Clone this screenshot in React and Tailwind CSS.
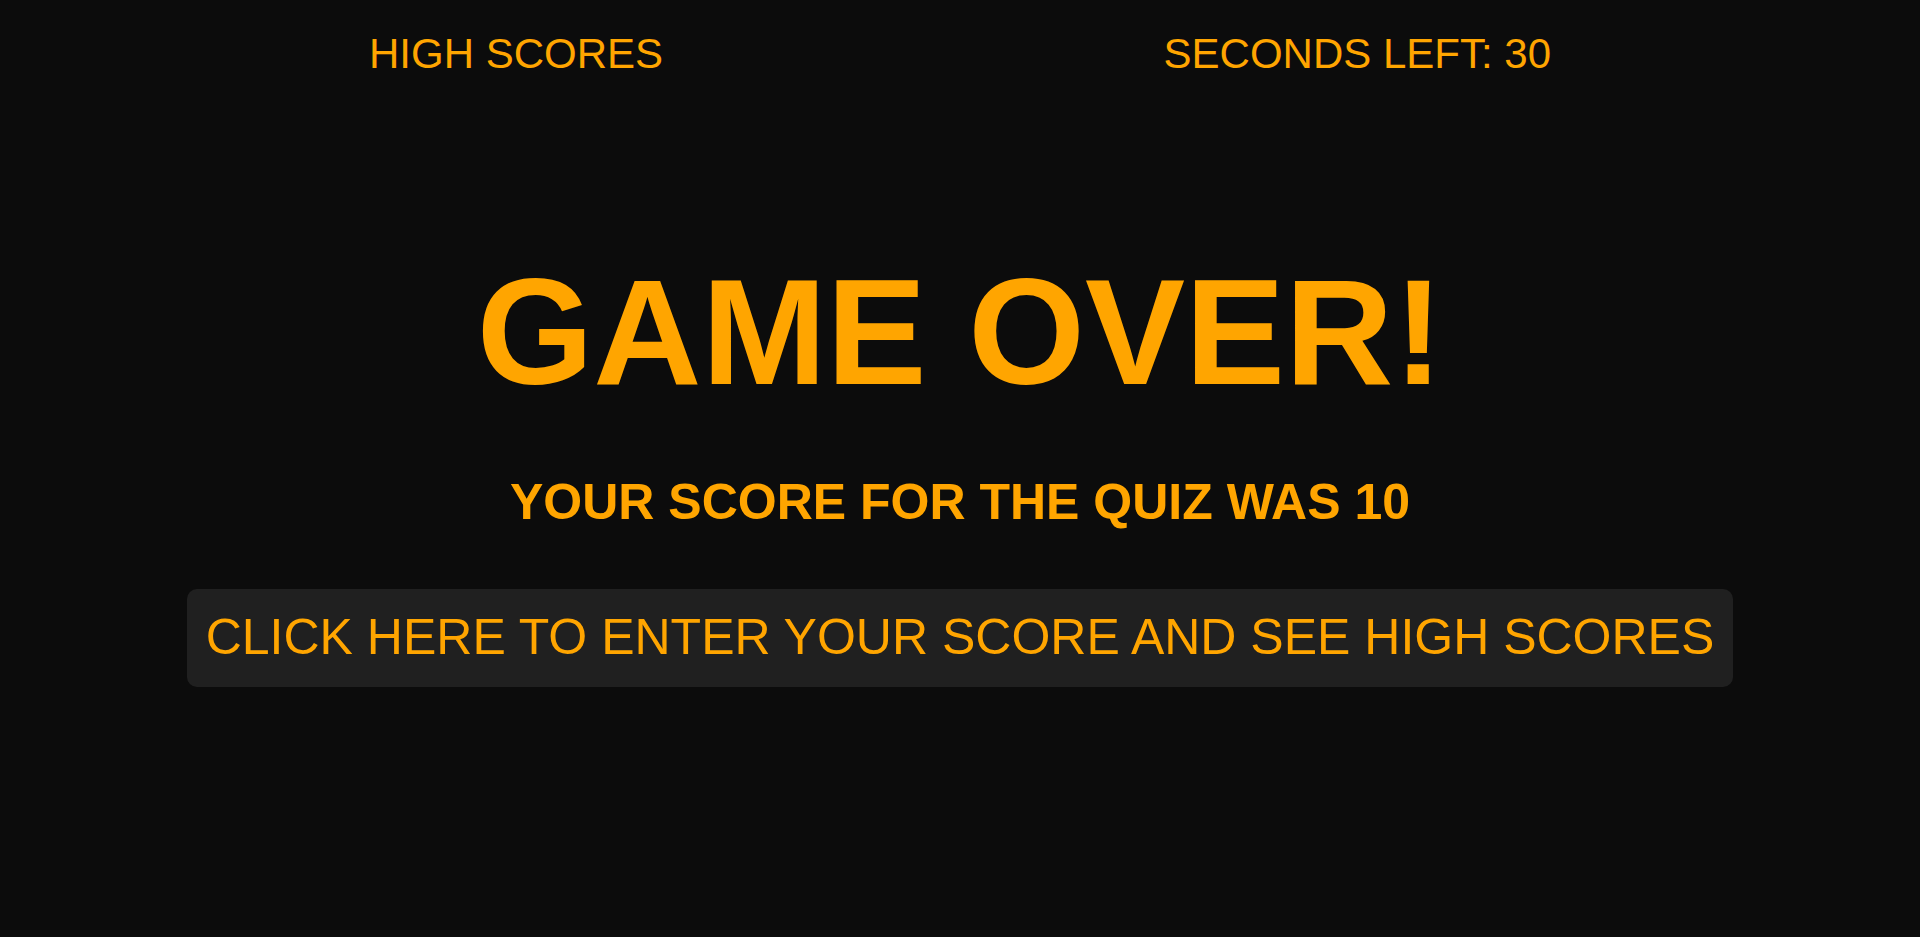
export default function App() {
  return (
    <div className="min-h-[937px] w-full bg-[#0c0c0c] text-[#ffa500] font-['Liberation_Sans',Arial,sans-serif] flex flex-col items-center">
      <header className="w-[1182px] mt-[30px] flex justify-between text-[42px] leading-[48px]">
        <a className="cursor-pointer">HIGH SCORES</a>
        <div>SECONDS LEFT: 30</div>
      </header>
      <h1 className="mt-[179px] text-[150px] leading-none font-bold">GAME OVER!</h1>
      <h2 className="mt-[70px] text-[50px] leading-none font-bold">YOUR SCORE FOR THE QUIZ WAS 10</h2>
      <button className="mt-[62px] bg-[#202020] rounded-[10px] px-[19px] py-5 text-[50px] leading-[57.5px] text-[#ffa500]">
        CLICK HERE TO ENTER YOUR SCORE AND SEE HIGH SCORES
      </button>
    </div>
  );
}
